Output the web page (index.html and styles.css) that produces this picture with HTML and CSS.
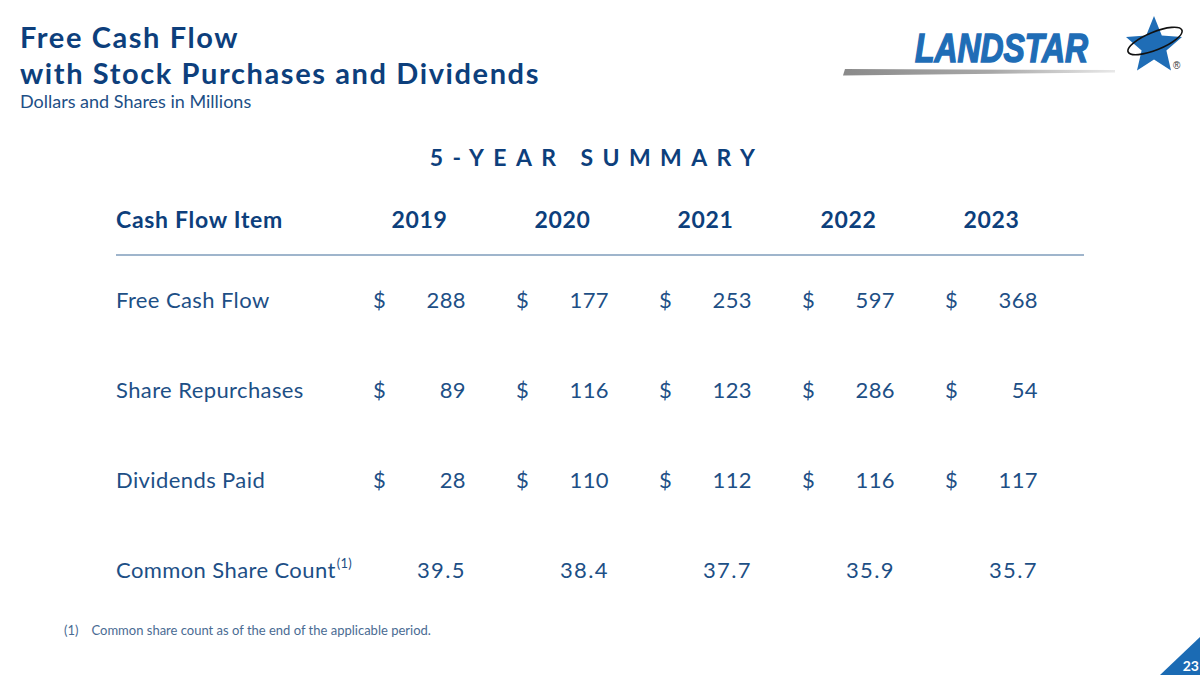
FILE: index.html
```html
<!DOCTYPE html>
<html>
<head>
<meta charset="utf-8">
<link rel="stylesheet" href="styles.css">
</head>
<body>
<div class="slide">
  <header class="top">
    <div class="titles">
      <h1 class="title">Free Cash Flow<br>with Stock Purchases and Dividends</h1>
      <div class="subtitle">Dollars and Shares in Millions</div>
    </div>
    <svg class="logo" width="360" height="72" viewBox="0 0 360 72">
      <defs>
        <linearGradient id="sw" x1="0" x2="1" y1="0" y2="0">
          <stop offset="0" stop-color="#8a8a8a"/>
          <stop offset="0.55" stop-color="#a8a8a8"/>
          <stop offset="1" stop-color="#e8e8e8"/>
        </linearGradient>
      </defs>
      <polygon points="22,59 292,60 292,62.5 20,65.5" fill="url(#sw)"/>
      <text x="92" y="52" class="logo-text" textLength="173" lengthAdjust="spacingAndGlyphs">LANDSTAR</text>
      <polygon fill="#1f6db6" points="331,6 338.8,25.5 359,27 343.4,40.5 348,60.5 331,49.5 314,60.5 318.6,40.5 303,27 323.2,25.5"/>
      <ellipse cx="332" cy="31" rx="29" ry="9" fill="none" stroke="#111" stroke-width="1.6" transform="rotate(-22 332 31)"/>
      <text x="350" y="59" class="reg">®</text>
    </svg>
  </header>

  <h2 class="summary">5-YEAR SUMMARY</h2>

  <div class="table">
    <div class="row head">
      <div class="label">Cash Flow Item</div>
      <div class="col year">2019</div>
      <div class="col year">2020</div>
      <div class="col year">2021</div>
      <div class="col year">2022</div>
      <div class="col year">2023</div>
    </div>
    <div class="rule"></div>
    <div class="row">
      <div class="label">Free Cash Flow</div>
      <div class="col"><span>$</span><span>288</span></div>
      <div class="col"><span>$</span><span>177</span></div>
      <div class="col"><span>$</span><span>253</span></div>
      <div class="col"><span>$</span><span>597</span></div>
      <div class="col"><span>$</span><span>368</span></div>
    </div>
    <div class="row">
      <div class="label">Share Repurchases</div>
      <div class="col"><span>$</span><span>89</span></div>
      <div class="col"><span>$</span><span>116</span></div>
      <div class="col"><span>$</span><span>123</span></div>
      <div class="col"><span>$</span><span>286</span></div>
      <div class="col"><span>$</span><span>54</span></div>
    </div>
    <div class="row">
      <div class="label">Dividends Paid</div>
      <div class="col"><span>$</span><span>28</span></div>
      <div class="col"><span>$</span><span>110</span></div>
      <div class="col"><span>$</span><span>112</span></div>
      <div class="col"><span>$</span><span>116</span></div>
      <div class="col"><span>$</span><span>117</span></div>
    </div>
    <div class="row">
      <div class="label">Common Share Count<sup>(1)</sup></div>
      <div class="col num"><span>39.5</span></div>
      <div class="col num"><span>38.4</span></div>
      <div class="col num"><span>37.7</span></div>
      <div class="col num"><span>35.9</span></div>
      <div class="col num"><span>35.7</span></div>
    </div>
  </div>

  <div class="footnote"><span class="fn-num">(1)</span><span>Common share count as of the end of the applicable period.</span></div>

  <div class="pagenum"><span>23</span></div>
</div>
</body>
</html>
```

FILE: styles.css
```css
* { box-sizing: border-box; margin: 0; padding: 0; }
html, body { width: 1200px; height: 675px; overflow: hidden; background: #fff; }
body { font-family: Lato, "Open Sans", sans-serif; color: #1d4f86; }

.slide { position: relative; width: 1200px; height: 675px; }

.top { display: flex; justify-content: space-between; align-items: flex-start; }
.titles { padding: 19px 0 0 20px; }
.title {
  font-size: 29px; font-weight: 700; line-height: 36px; color: #0d3f7c; letter-spacing: 1.6px;
}
.subtitle { font-size: 18px; line-height: 20px; color: #1d4f86; margin-top: 0; }

.logo { margin: 10px 17px 0 0; }
.logo-text {
  font-family: "Liberation Sans", Arial, sans-serif; font-weight: 700; font-style: italic;
  font-size: 40px; fill: #1f6db6; stroke: #1f6db6; stroke-width: 1.5px;
}
.reg { font-family: "Liberation Sans", Arial, sans-serif; font-size: 10px; fill: #333; }

.summary {
  text-align: center; font-size: 23px; font-weight: 700; letter-spacing: 9.4px;
  color: #0d3f7c; margin-top: 33px; line-height: 26px; padding-right: 6px;
}

.table { margin: 0 0 0 116px; width: 968px; }
.row {
  display: grid;
  grid-template-columns: 207px repeat(5, 93px);
  column-gap: 50px;
  align-items: center;
  height: 90px;
  padding-bottom: 4px;
  font-size: 22px;
  letter-spacing: 0.4px;
}
.row.head { height: 38px; margin-top: 30px; padding-bottom: 0; font-weight: 700; font-size: 23px; color: #0d3f7c; letter-spacing: 0.7px; }
.row.head .year { justify-content: center; }
.rule { height: 2px; background: #9fb5cc; margin: 16px 0 0 0; }
.col { display: flex; justify-content: space-between; }
.col.num { justify-content: flex-end; letter-spacing: 1.4px; }
.label { white-space: nowrap; }
.label sup { font-size: 13px; vertical-align: 10px; line-height: 0; letter-spacing: 0.3px; margin-left: 1px; }

.footnote {
  display: flex; gap: 13px; margin: 0 0 0 64px; font-size: 13px; color: #4a6b93;
  position: absolute; top: 622px;
}

.pagenum {
  position: absolute; right: 0; bottom: 0; width: 40px; height: 38px;
  background: #1b6bb4; clip-path: polygon(100% 0, 100% 100%, 0 100%);
}
.pagenum span {
  position: absolute; right: 1px; bottom: 2px; color: #fff; font-weight: 700; font-size: 14px; line-height: 14px;
}
```
